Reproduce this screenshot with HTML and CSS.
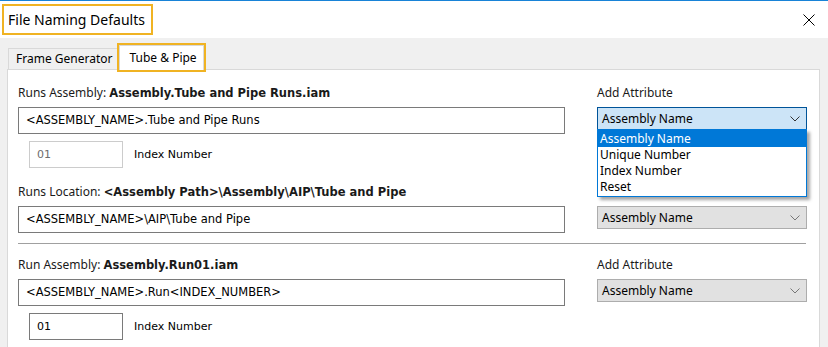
FILE: index.html
```html
<!DOCTYPE html>
<html lang="en">
<head>
    <meta charset="UTF-8">
    <title>File Naming Defaults</title>
    <link rel="stylesheet" href="styles.css">
</head>
<body>
    <div class="window">
        <div class="titlebar">
            <span class="title hl">File Naming Defaults</span>
            <svg class="close" width="12" height="12" viewBox="0 0 12 12">
                <path d="M0.5 0.5 L11.5 11.5 M11.5 0.5 L0.5 11.5" stroke="#000" stroke-width="1" fill="none"/>
            </svg>
        </div>

        <div class="client">
            <div class="tabs">
                <div class="tab">Frame Generator</div>
                <div class="tab active hl">Tube &amp; Pipe</div>
            </div>

            <div class="panel">
                <div class="row label-row">
                    <div class="label">Runs Assembly: <b>Assembly.Tube and Pipe Runs.iam</b></div>
                    <div class="label ui">Add Attribute</div>
                </div>
                <div class="row field-row">
                    <div class="textbox">&lt;ASSEMBLY_NAME&gt;.Tube and Pipe Runs</div>
                    <div class="combo-wrap">
                        <div class="combo open">
                            <span>Assembly Name</span>
                            <svg class="chev" width="10" height="6" viewBox="0 0 10 6"><path d="M0.5 0.5 L5 5 L9.5 0.5" stroke="#333" fill="none"/></svg>
                        </div>
                        <ul class="droplist">
                            <li class="sel">Assembly Name</li>
                            <li>Unique Number</li>
                            <li>Index Number</li>
                            <li>Reset</li>
                        </ul>
                    </div>
                </div>
                <div class="index-row">
                    <div class="indexbox disabled">01</div>
                    <span>Index Number</span>
                </div>

                <div class="row label-row loc">
                    <div class="label">Runs Location: <b>&lt;Assembly Path&gt;\Assembly\AIP\Tube and Pipe</b></div>
                    <div></div>
                </div>
                <div class="row field-row">
                    <div class="textbox">&lt;ASSEMBLY_NAME&gt;\AIP\Tube and Pipe</div>
                    <div class="combo-wrap">
                        <div class="combo">
                            <span>Assembly Name</span>
                            <svg class="chev" width="10" height="6" viewBox="0 0 10 6"><path d="M0.5 0.5 L5 5 L9.5 0.5" stroke="#777" fill="none"/></svg>
                        </div>
                    </div>
                </div>

                <div class="separator"></div>

                <div class="row label-row">
                    <div class="label">Run Assembly: <b>Assembly.Run01.iam</b></div>
                    <div class="label ui">Add Attribute</div>
                </div>
                <div class="row field-row">
                    <div class="textbox">&lt;ASSEMBLY_NAME&gt;.Run&lt;INDEX_NUMBER&gt;</div>
                    <div class="combo-wrap">
                        <div class="combo">
                            <span>Assembly Name</span>
                            <svg class="chev" width="10" height="6" viewBox="0 0 10 6"><path d="M0.5 0.5 L5 5 L9.5 0.5" stroke="#777" fill="none"/></svg>
                        </div>
                    </div>
                </div>
                <div class="index-row">
                    <div class="indexbox">01</div>
                    <span>Index Number</span>
                </div>
            </div>
        </div>
    </div>
</body>
</html>
```

FILE: styles.css
```css
body { margin: 0; padding: 0; background: #f0f0f0; font-family: "Noto Sans", sans-serif; font-size: 12px; color: #000; }
.window { width: 828px; height: 347px; overflow: hidden; background: #f0f0f0; border-top: 1px solid #1883d7; box-sizing: border-box; }

.hl { outline: 2px solid #f0b323; outline-offset: 0; }

.titlebar { height: 37px; background: #fff; display: flex; align-items: center; justify-content: space-between; padding: 0 13px 0 4px; }
.title { font-size: 14px; padding: 0 6px 0 4px; line-height: 27px; }
.close { display: block; }

.client { padding: 9px 8px 0 7px; }
.tabs { display: flex; align-items: flex-end; height: 22px; padding-left: 1px; position: relative; z-index: 1; }
.tab { height: 21px; line-height: 20px; padding: 0 6px 0 7px; background: #f0f0f0; border: 1px solid #d9d9d9; border-bottom: none; box-sizing: border-box; }
.tab.active { height: 25px; background: #fff; border-color: #d9d9d9; padding: 0 6px 0 9px; line-height: 24px; margin-bottom: -1px; }

.panel { background: #fff; border: 1px solid #d9d9d9; height: 300px; box-sizing: border-box; padding: 14px 12px 0 10px; }

.row { display: grid; grid-template-columns: 547px 210px; column-gap: 32px; }
.label-row { height: 18px; line-height: 18px; }
.label { font-family: "Noto Sans", sans-serif; font-size: 12px; color: #1a1a1a; white-space: nowrap; }
.label b { font-family: "DejaVu Sans", sans-serif; font-size: 11.5px; }
.label-row.loc { margin-top: 15px; }

.field-row { margin-top: 5px; align-items: start; }
.textbox { height: 27px; border: 1px solid #7a7a7a; box-sizing: border-box; line-height: 24px; padding-left: 7px; font-family: "DejaVu Sans", sans-serif; font-size: 11.5px; }

.combo-wrap { position: relative; }
.combo { height: 23px; border: 1px solid #adadad; background: #e1e1e1; box-sizing: border-box; display: flex; align-items: center; justify-content: space-between; padding: 0 6px 0 4px; }
.combo.open { background: #cce4f7; border-color: #005499; }
.chev { display: block; }

.droplist { position: absolute; top: 22px; left: 0; width: 210px; margin: 0; padding: 0 0 1px 0; list-style: none; background: #fff; border: 1px solid #0078d7; box-sizing: border-box; box-shadow: 3px 3px 3px rgba(0, 0, 0, 0.35); z-index: 2; }
.droplist li { height: 16px; line-height: 16px; padding-left: 2px; }
.droplist li.sel { background: #0078d7; color: #fff; height: 17px; line-height: 17px; }

.index-row { display: flex; align-items: center; margin-top: 7px; padding-left: 11px; font-family: "DejaVu Sans", sans-serif; font-size: 11px; }
.indexbox { width: 94px; height: 27px; border: 1px solid #7a7a7a; box-sizing: border-box; line-height: 25px; padding-left: 7px; margin-right: 11px; }
.indexbox.disabled { border-color: #cccccc; color: #6d6d6d; }

.separator { height: 1px; background: #a0a0a0; margin: 10px 0 12px 0; width: 788px; }
```
